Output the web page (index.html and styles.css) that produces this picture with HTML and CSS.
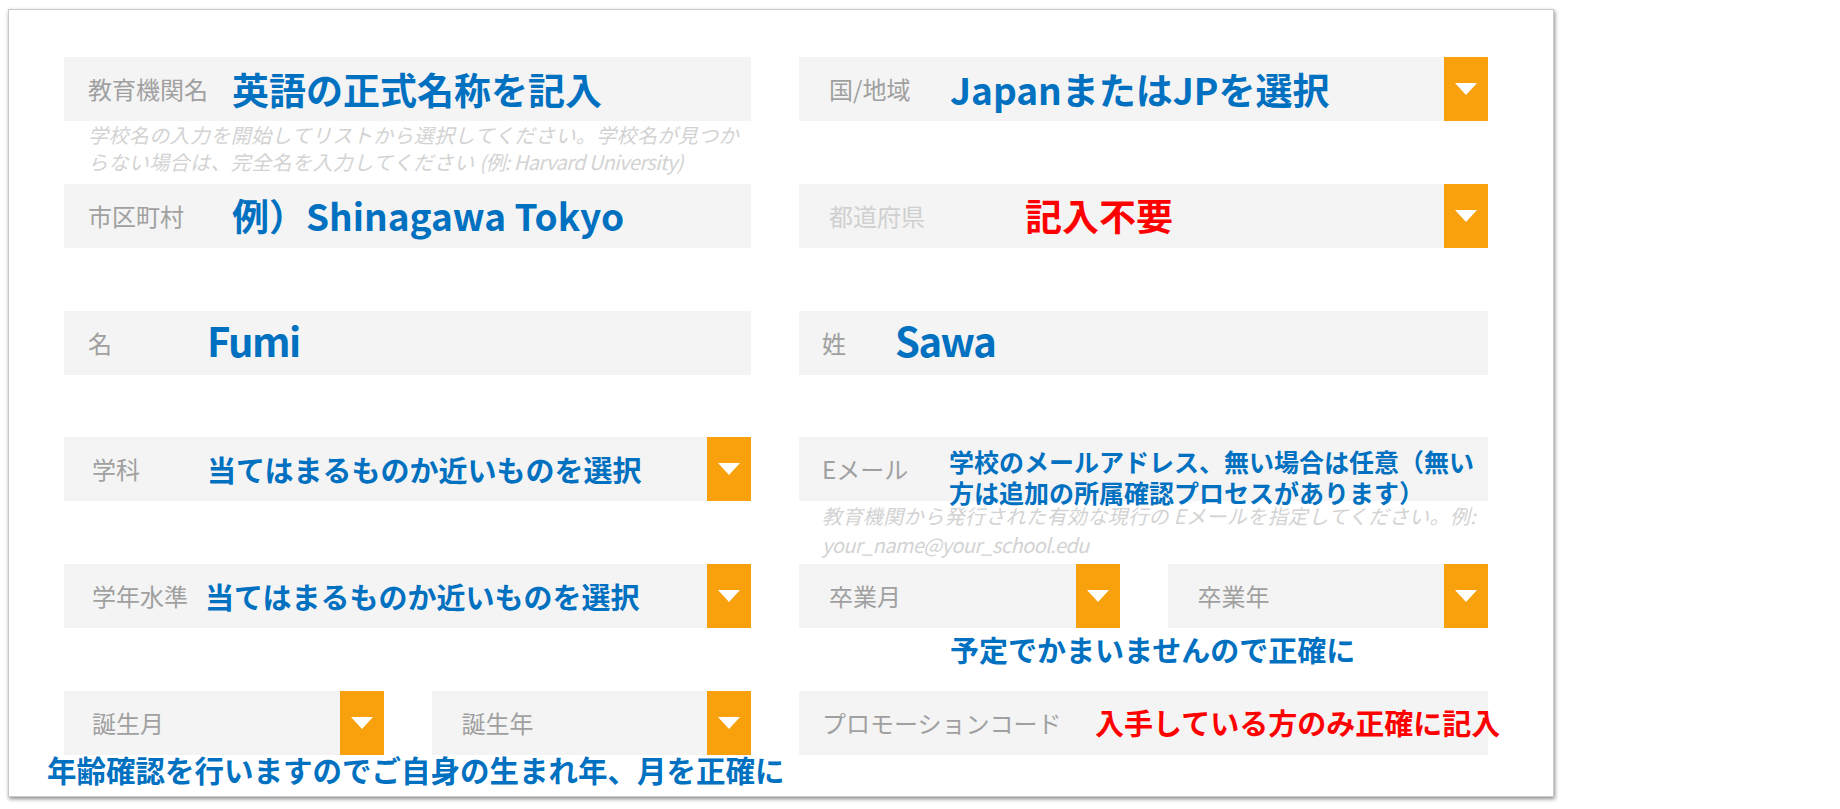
FILE: index.html
```html
<!DOCTYPE html>
<html lang="ja">
<head>
<meta charset="utf-8">
<title>教育機関フォーム</title>
<link rel="stylesheet" href="styles.css">
</head>
<body>
<div class="card">
  <div class="form">
    <!-- row 1 -->
    <div class="field">
      <span class="label lw-144">教育機関名</span>
      <span class="val blue xl">英語の正式名称を記入</span>
    </div>
    <div class="field pl-30">
      <span class="label lw-121">国/地域</span>
      <span class="val blue xl">JapanまたはJPを選択</span>
      <span class="dd"><span class="tri"></span></span>
    </div>
    <!-- gap 1 -->
    <div class="note">
      <p class="helper hl-27">学校名の入力を開始してリストから選択してください。学校名が見つか<br>らない場合は、完全名を入力してください <span class="latin">(例: Harvard University)</span></p>
    </div>
    <div class="note"></div>
    <!-- row 2 -->
    <div class="field">
      <span class="label lw-144">市区町村</span>
      <span class="val blue xl">例）Shinagawa Tokyo</span>
    </div>
    <div class="field pl-30">
      <span class="label light lw-196">都道府県</span>
      <span class="val red xl">記入不要</span>
      <span class="dd"><span class="tri"></span></span>
    </div>
    <div class="note"></div>
    <div class="note"></div>
    <!-- row 3 -->
    <div class="field">
      <span class="label lw-119">名</span>
      <span class="val blue name">Fumi</span>
    </div>
    <div class="field pl-23">
      <span class="label lw-73">姓</span>
      <span class="val blue name">Sawa</span>
    </div>
    <div class="note"></div>
    <div class="note"></div>
    <!-- row 4 -->
    <div class="field pl-28">
      <span class="label lw-115">学科</span>
      <span class="val blue md">当てはまるものか近いものを選択</span>
      <span class="dd"><span class="tri"></span></span>
    </div>
    <div class="field pl-23">
      <span class="label lw-127">Eメール</span>
      <span class="val blue sm two">学校のメールアドレス、無い場合は任意（無い<br>方は追加の所属確認プロセスがあります）</span>
    </div>
    <div class="note"></div>
    <div class="note">
      <p class="helper hl-29 pad-23">教育機関から発行された有効な現行の Eメールを指定してください。例:<br><span class="latin">your_name@your_school.edu</span></p>
    </div>
    <!-- row 5 -->
    <div class="field pl-28">
      <span class="label lw-113">学年水準</span>
      <span class="val blue md">当てはまるものか近いものを選択</span>
      <span class="dd"><span class="tri"></span></span>
    </div>
    <div class="pair">
      <div class="field pl-30">
        <span class="label">卒業月</span>
        <span class="dd"><span class="tri"></span></span>
      </div>
      <div class="field pl-30">
        <span class="label">卒業年</span>
        <span class="dd"><span class="tri"></span></span>
      </div>
    </div>
    <div class="note"></div>
    <div class="note">
      <p class="annot blue md grad">予定でかまいませんので正確に</p>
    </div>
    <!-- row 6 -->
    <div class="pair">
      <div class="field pl-28">
        <span class="label">誕生月</span>
        <span class="dd"><span class="tri"></span></span>
      </div>
      <div class="field pl-30">
        <span class="label">誕生年</span>
        <span class="dd"><span class="tri"></span></span>
      </div>
    </div>
    <div class="field pl-23">
      <span class="label lw-273">プロモーションコード</span>
      <span class="val red md">入手している方のみ正確に記入</span>
    </div>
    <div class="note">
      <p class="annot blue age">年齢確認を行いますのでご自身の生まれ年、月を正確に</p>
    </div>
    <div class="note"></div>
  </div>
</div>
</body>
</html>
```

FILE: styles.css
```css
* { box-sizing: border-box; }

html, body {
  margin: 0;
  padding: 0;
  background: #ffffff;
}

body {
  font-family: "Noto Sans CJK JP", "Noto Sans", sans-serif;
  width: 1840px;
  height: 809px;
  overflow: hidden;
}

.card {
  margin: 9px 0 0 8px;
  width: 1546px;
  height: 788px;
  border: 1px solid #c9c9c9;
  background: #ffffff;
  box-shadow: 1px 2px 4px rgba(0, 0, 0, 0.45);
  padding: 47px 64px 0 55px;
}

.form {
  display: grid;
  grid-template-columns: 687px 689px;
  grid-template-rows: 64px 62.8px 64px 62.8px 64px 62.8px 64px 62.8px 64px 62.8px 64px 40px;
  column-gap: 48px;
}

.field {
  position: relative;
  display: flex;
  align-items: center;
  height: 100%;
  background: #f4f4f4;
  padding-left: 24px;
  min-width: 0;
}

.pl-23 { padding-left: 23px; }
.pl-28 { padding-left: 28px; }
.pl-30 { padding-left: 30px; }

.label {
  flex: none;
  font-size: 24px;
  color: #a0a0a0;
  white-space: nowrap;
  line-height: 1;
}

.label.light { color: #d0d0d0; }

.lw-73 { width: 73px; }
.lw-113 { width: 113px; }
.lw-115 { width: 115px; }
.lw-119 { width: 119px; }
.lw-121 { width: 121px; }
.lw-127 { width: 127px; }
.lw-144 { width: 144px; }
.lw-196 { width: 196px; }
.lw-273 { width: 273px; }

.val {
  font-weight: 700;
  white-space: nowrap;
  line-height: 1;
}

.blue { color: #0070c0; }
.red { color: #ff0000; }

.xl { font-size: 37px; }
.name {
  font-size: 40px;
  letter-spacing: -1.5px;
  margin-top: -6px;
}
.md { font-size: 29px; }
.sm { font-size: 25px; }

.two {
  line-height: 31px;
  margin-top: 16px;
}

.dd {
  margin-left: auto;
  flex: none;
  width: 44px;
  height: 100%;
  background: #f9a10c;
  display: flex;
  align-items: center;
  justify-content: center;
}

.tri {
  width: 0;
  height: 0;
  border-left: 11px solid transparent;
  border-right: 11px solid transparent;
  border-top: 12px solid #ffffff;
}

.pair {
  display: grid;
  grid-template-columns: 1fr 1fr;
  column-gap: 48px;
}

.note {
  min-width: 0;
}

.helper {
  margin: 0;
  padding-left: 24px;
  font-size: 20px;
  font-style: italic;
  color: #d3d3d3;
  letter-spacing: 0.4px;
  white-space: nowrap;
}

.helper .latin { letter-spacing: -0.6px; }

.helper.pad-23 { padding-left: 23px; }
.hl-27 { line-height: 27px; }
.hl-29 { line-height: 29px; }

.annot {
  margin: 0;
  font-weight: 700;
  white-space: nowrap;
}

.grad {
  margin-top: 7px;
  margin-left: 151px;
  line-height: 29px;
}

.age {
  font-size: 29.5px;
  line-height: 26px;
  margin-left: -17px;
  margin-top: 1px;
}
```
